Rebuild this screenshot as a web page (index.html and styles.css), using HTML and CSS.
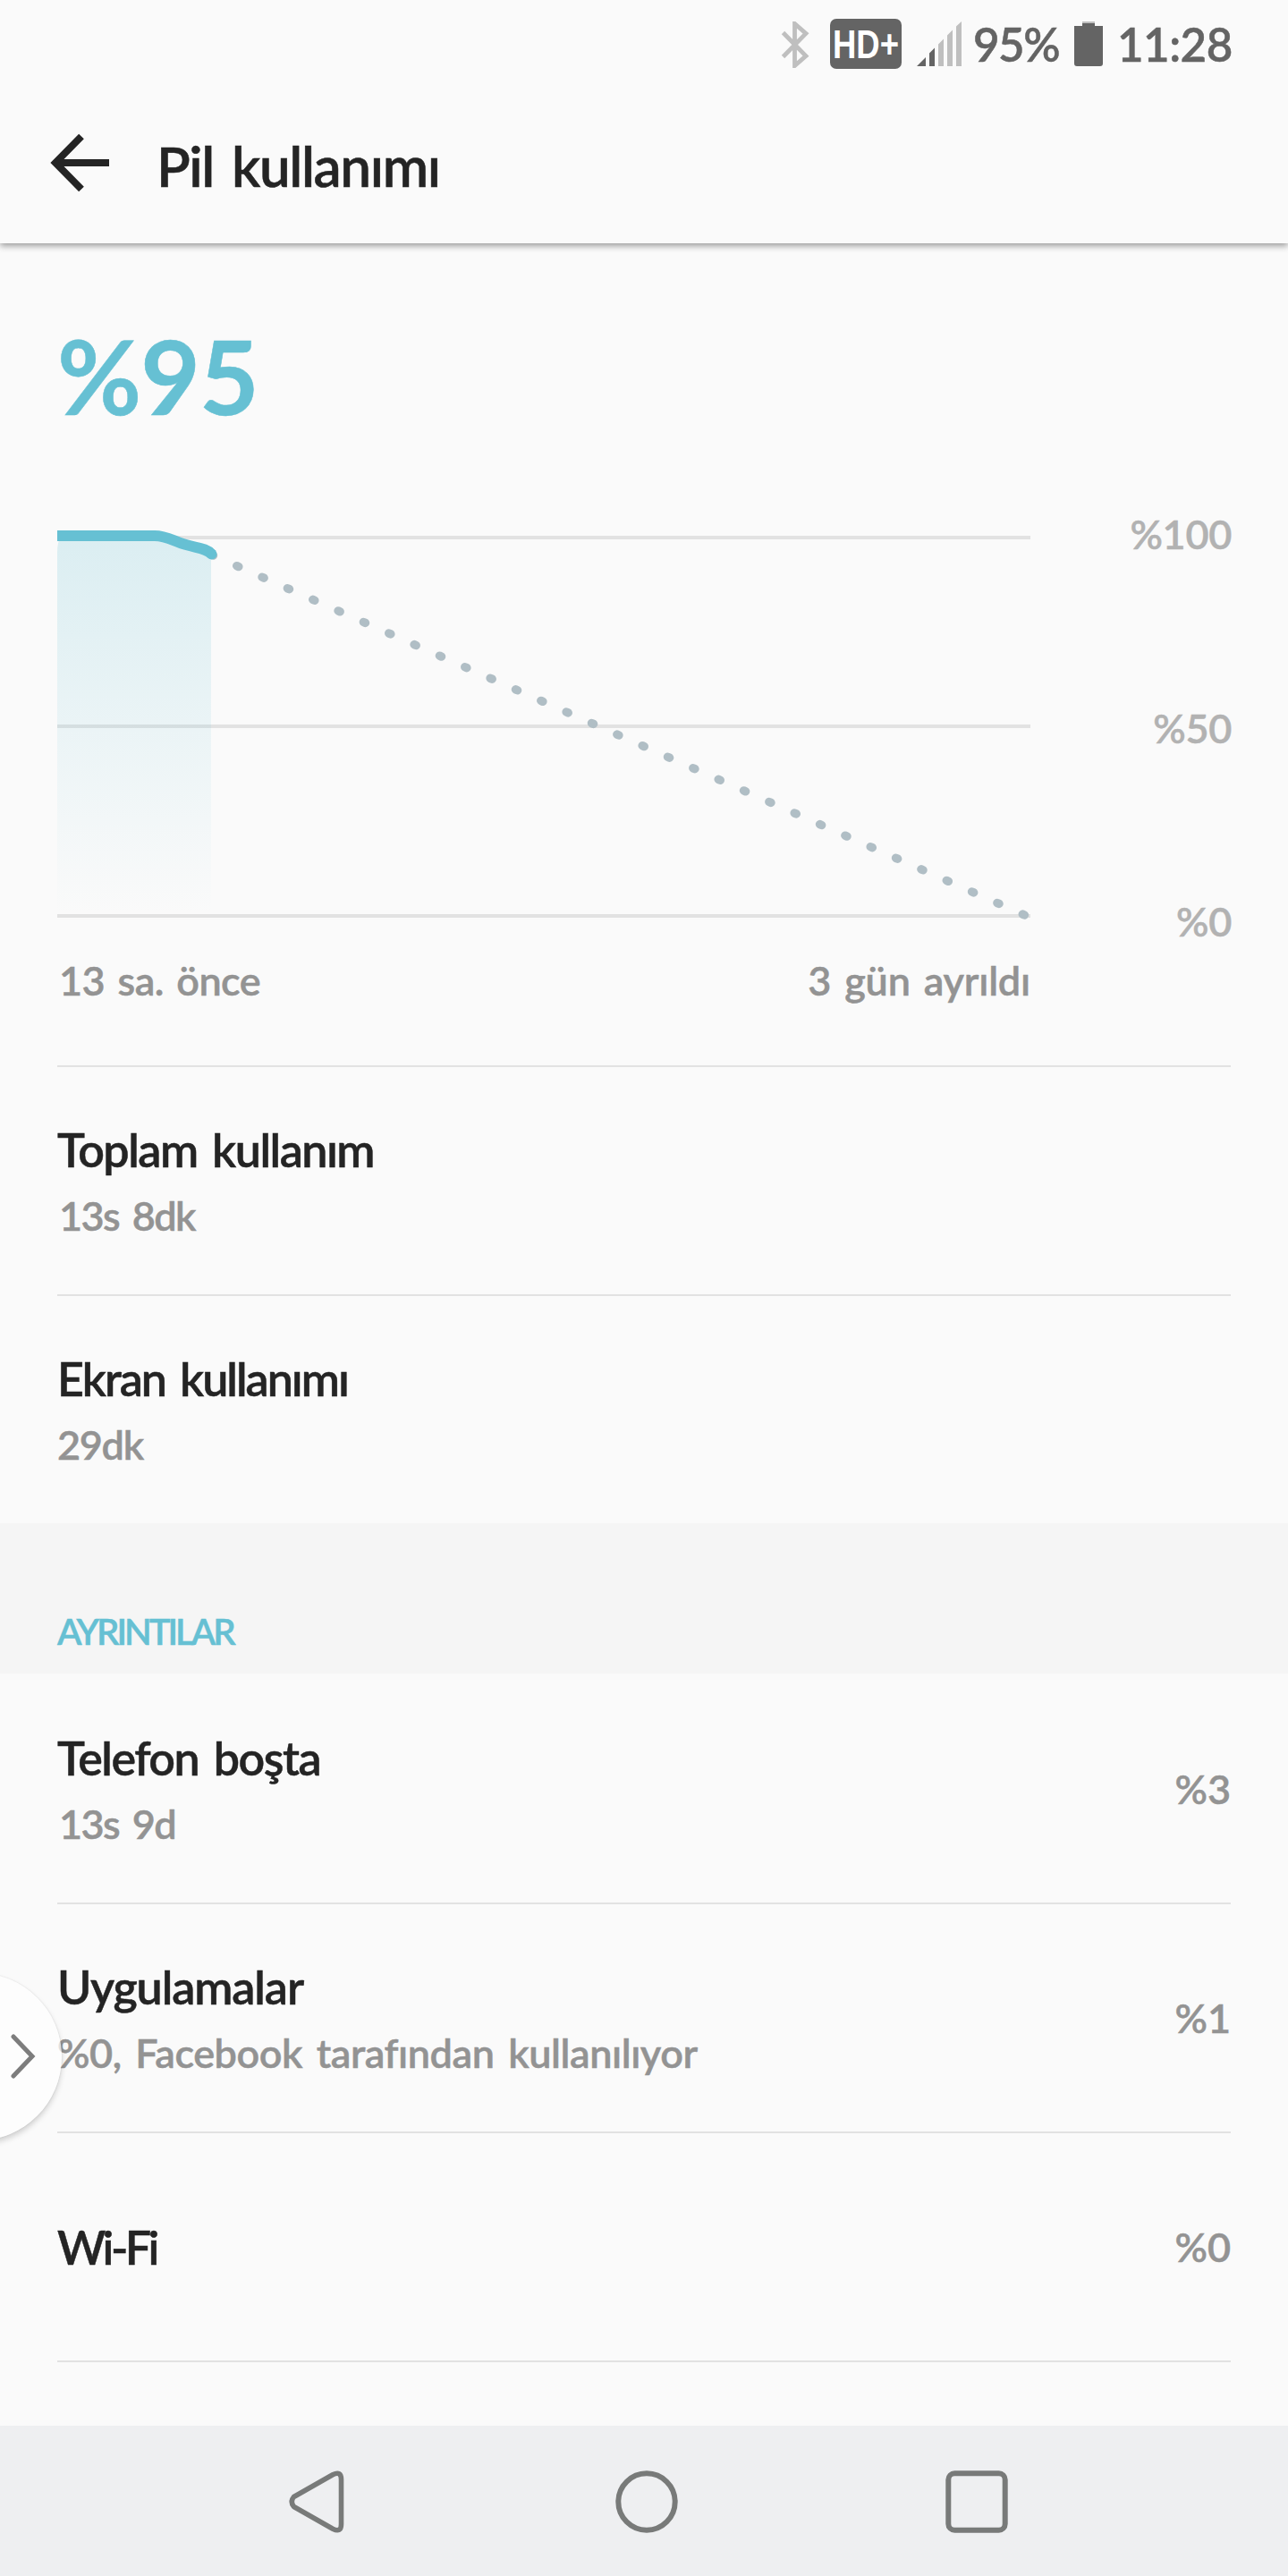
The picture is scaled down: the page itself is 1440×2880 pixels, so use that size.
FILE: index.html
```
<!DOCTYPE html>
<html lang="tr">
<head>
<meta charset="utf-8">
<title>Pil kullanımı</title>
<link rel="stylesheet" href="styles.css">
</head>
<body>
<div class="screen">
  <div class="status-bar">
    <svg class="icon-bluetooth" width="32" height="52" viewBox="0 0 32 52"><path d="M2.500 12.500 28 38.500 15.500 49.500V2.500L28 13.500 2.500 39.500" fill="none" stroke="#bfbfbf" stroke-width="4.800"/></svg>
    <svg class="hd-badge" width="80" height="56" viewBox="0 0 80 56"><rect width="80" height="56" rx="7" fill="#646464"/><text x="3" y="44" textLength="74" lengthAdjust="spacingAndGlyphs">HD+</text></svg>
    <svg class="icon-signal" width="50" height="50" viewBox="0 0 50 50"><path d="M0 50 10 40V50zM14 50V35.500L20 29.500V50z" fill="#646464"/><path d="M24 50V25.500L30 19.500V50zM34 50V15.500L40 9.500V50zM44 50V5.500L50 0V50z" fill="#bfbfbf"/></svg>
    <span class="status-level">95%</span>
    <svg class="icon-battery" width="32" height="50" viewBox="0 0 32 50"><path d="M9 0h14v3H9z" fill="#bfbfbf"/><path d="M9 2h14v3h9v42q0 3-3 3H3q-3 0-3-3V5h9z" fill="#646464"/></svg>
    <span class="status-clock">11:28</span>
  </div>

  <header class="app-bar">
    <svg class="icon-back" width="68" height="66" viewBox="0 0 68 66"><path d="M66 33H6M35 3.500 6 33 35 62.500" fill="none" stroke="#242424" stroke-width="8"/></svg>
    <h1 class="app-title">Pil kullanımı</h1>
  </header>

  <main class="content">
    <div class="level">%95</div>

    <div class="chart">
      <svg class="chart-plot" width="1098" height="480" viewBox="64 573 1098 480">
        <defs>
          <linearGradient id="fill" x1="0" y1="0" x2="0" y2="1">
            <stop offset="0" stop-color="#66c0d3" stop-opacity=".21"/>
            <stop offset="1" stop-color="#66c0d3" stop-opacity="0"/>
          </linearGradient>
        </defs>
        <path d="M64 601H1152M64 812H1152M64 1024H1152" stroke="#e2e2e2" stroke-width="4"/>
        <path d="M64 618Q64 604 69 600H173C188 600 196 606 208 610S232 612 236 620V1022H64Z" fill="url(#fill)"/>
        <path d="M236.400 620.100 1146 1023.300" stroke="#b0bec5" stroke-width="9.500" stroke-linecap="round" stroke-dasharray="2.200 28.800" fill="none"/>
        <path d="M64 599H173C186 599 194 605 208 609C221 613 230 612.500 236.500 619.500" fill="none" stroke="#66c0d3" stroke-width="12"/>
        <circle cx="236.500" cy="619.500" r="6" fill="#66c0d3"/>
      </svg>
      <div class="chart-scale"><span>%100</span><span>%50</span><span>%0</span></div>
    </div>
    <div class="chart-range"><span class="range-start">13 sa. önce</span><span class="range-end">3 gün ayrıldı</span></div>

    <ul class="list">
      <li class="item"><div class="item-text"><span class="item-title">Toplam kullanım</span><span class="item-sub lead-one">13s 8dk</span></div></li>
      <li class="item"><div class="item-text"><span class="item-title snug">Ekran kullanımı</span><span class="item-sub short">29dk</span></div></li>
    </ul>

    <h2 class="section">AYRINTILAR</h2>

    <ul class="list details">
      <li class="item"><div class="item-text"><span class="item-title">Telefon boşta</span><span class="item-sub lead-one">13s 9d</span></div><span class="item-value">%3</span></li>
      <li class="item"><div class="item-text"><span class="item-title loose">Uygulamalar</span><span class="item-sub">%0, Facebook tarafından kullanılıyor</span></div><span class="item-value">%1</span></li>
      <li class="item"><div class="item-text"><span class="item-title wifi">Wi-Fi</span></div><span class="item-value">%0</span></li>
      <li class="item-rest"></li>
    </ul>
  </main>

  <nav class="nav-bar">
    <svg class="nav-back" width="62" height="70" viewBox="0 0 62 70"><path d="M5.500 29.500 49 4.800Q58.500 0 58.500 10V60Q58.500 70 49 65.200L5.500 40.500Q1 35 5.500 29.500Z" fill="none" stroke="#787a79" stroke-width="5.600" stroke-linejoin="round"/></svg>
    <svg class="nav-home" width="70" height="70" viewBox="0 0 70 70"><circle cx="35" cy="35" r="31.700" fill="none" stroke="#787a79" stroke-width="6"/></svg>
    <svg class="nav-recent" width="70" height="70" viewBox="0 0 70 70"><rect x="3.300" y="3.300" width="63.400" height="63.400" rx="7" fill="none" stroke="#787a79" stroke-width="6"/></svg>
  </nav>

  <div class="float-handle">
    <svg width="30" height="54" viewBox="0 0 30 54"><path d="M4 5 25 27 4 49" fill="none" stroke="#7d7d7d" stroke-width="5" stroke-linecap="round"/></svg>
  </div>
</div>
</body>
</html>
```
FILE: styles.css
```
* {
  box-sizing: border-box;
}

body {
  margin: 0;
  background: #fafafa;
  font-family: Lato, "Open Sans", sans-serif;
  font-weight: 600;
  color: #242424;
  -webkit-text-stroke: 0.5px currentColor;
}

svg {
  display: block;
  flex: none;
}

.screen {
  position: relative;
  display: flex;
  flex-direction: column;
  width: 1440px;
  height: 2880px;
  overflow: hidden;
  background: #fafafa;
}

/* Status bar */
.status-bar {
  display: flex;
  align-items: center;
  justify-content: flex-end;
  height: 100px;
  padding-right: 60px;
  color: #646464;
  font-size: 51px;
  line-height: 60px;
  white-space: nowrap;
}

.icon-bluetooth {
  margin-right: 23px;
}

.hd-badge {
  margin: 0 17px 2px 0;
  overflow: visible;
  fill: #fff;
  font: bold 45px "Liberation Sans", sans-serif;
  -webkit-text-stroke: 0;
}

.icon-signal {
  margin: 0 12px 2px 0;
}

.icon-battery {
  margin: 0 16px 2px 0;
}

.status-level {
  width: 114px;
  padding-left: 1px;
  letter-spacing: -1.5px;
}

.status-clock {
  width: 131px;
  letter-spacing: -0.5px;
}

/* App bar */
.app-bar {
  position: relative;
  z-index: 1;
  display: flex;
  align-items: center;
  gap: 51px;
  height: 172px;
  padding: 0 0 2px 56px;
  box-shadow: 0 3px 7px rgba(0, 0, 0, 0.38);
  clip-path: inset(0 0 -20px 0);
  background: #fafafa;
}

.icon-back {
  margin-bottom: 6px;
}

.app-title {
  margin: 0;
  font-size: 62px;
  font-weight: 600;
  line-height: 74px;
  letter-spacing: -1.4px;
  word-spacing: 6px;
}

/* Battery level and chart */
.content {
  flex: 1;
  padding-top: 90px;
}

.level {
  padding-left: 64px;
  color: #66c0d3;
  font-size: 115px;
  font-weight: 700;
  line-height: 115px;
  letter-spacing: -1px;
}

.chart {
  display: flex;
  justify-content: space-between;
  height: 480px;
  margin-top: 96px;
  padding: 0 63px 0 64px;
}

.chart-scale {
  display: flex;
  flex-direction: column;
  justify-content: space-between;
  padding-top: 1px;
  color: #b2b2b2;
  font-size: 45px;
  line-height: 46px;
  letter-spacing: -0.3px;
  text-align: right;
}

.chart-range {
  display: flex;
  justify-content: space-between;
  width: 1152px;
  height: 46px;
  margin: 20px 0 72px;
  padding-left: 66px;
  color: #939393;
  font-size: 45px;
  line-height: 46px;
  word-spacing: 4px;
}

.range-start {
  letter-spacing: -0.6px;
}

.range-end {
  letter-spacing: -0.2px;
}

/* Rows */
.list {
  margin: 0;
  padding: 0 64px;
  list-style: none;
}

.item {
  display: flex;
  align-items: center;
  justify-content: space-between;
  height: 256px;
  padding-bottom: 4px;
  border-top: 2px solid #e2e2e2;
}

.item-rest {
  border-top: 2px solid #e2e2e2;
}

.details .item:first-child {
  border-top-color: transparent;
}

.item-text {
  display: flex;
  flex-direction: column;
  gap: 20px;
}

.item-title {
  font-size: 52px;
  line-height: 62px;
  letter-spacing: -1.5px;
  word-spacing: 5px;
}

.item-title.snug {
  letter-spacing: -2px;
}

.item-title.loose {
  letter-spacing: -1.1px;
}

.item-title.wifi {
  padding-top: 4px;
  letter-spacing: -3.5px;
}

.item-sub {
  color: #939393;
  font-size: 45px;
  line-height: 46px;
  letter-spacing: -0.45px;
  word-spacing: 5px;
}

.item-sub.lead-one {
  padding-left: 2px;
  letter-spacing: -1.6px;
}

.item-sub.short {
  letter-spacing: -1.3px;
}

.item-value {
  padding-top: 4px;
  color: #939393;
  font-size: 45px;
  line-height: 46px;
}

.section {
  height: 168px;
  margin: 0;
  padding: 101px 64px 0;
  background: #f5f5f5;
  color: #66c0d3;
  font-size: 40px;
  font-weight: 600;
  line-height: 40px;
  letter-spacing: -3px;
}

/* Navigation bar */
.nav-bar {
  display: flex;
  align-items: center;
  gap: 300px;
  height: 168px;
  padding: 2px 0 0 323px;
  background: #eeeff1;
}

.nav-bar .nav-back {
  margin-right: 3px;
}

.nav-bar .nav-recent {
  margin-left: -1px;
}

/* Edge handle floating over the list */
.float-handle {
  position: absolute;
  left: -118px;
  top: 2206px;
  display: flex;
  align-items: center;
  justify-content: flex-end;
  width: 187px;
  height: 187px;
  padding: 0 28px 1px 0;
  border-radius: 50%;
  background: rgba(253, 253, 253, 0.7);
  box-shadow: 0 4px 6px rgba(0, 0, 0, 0.17), 0 0 2px rgba(0, 0, 0, 0.12);
}
```
